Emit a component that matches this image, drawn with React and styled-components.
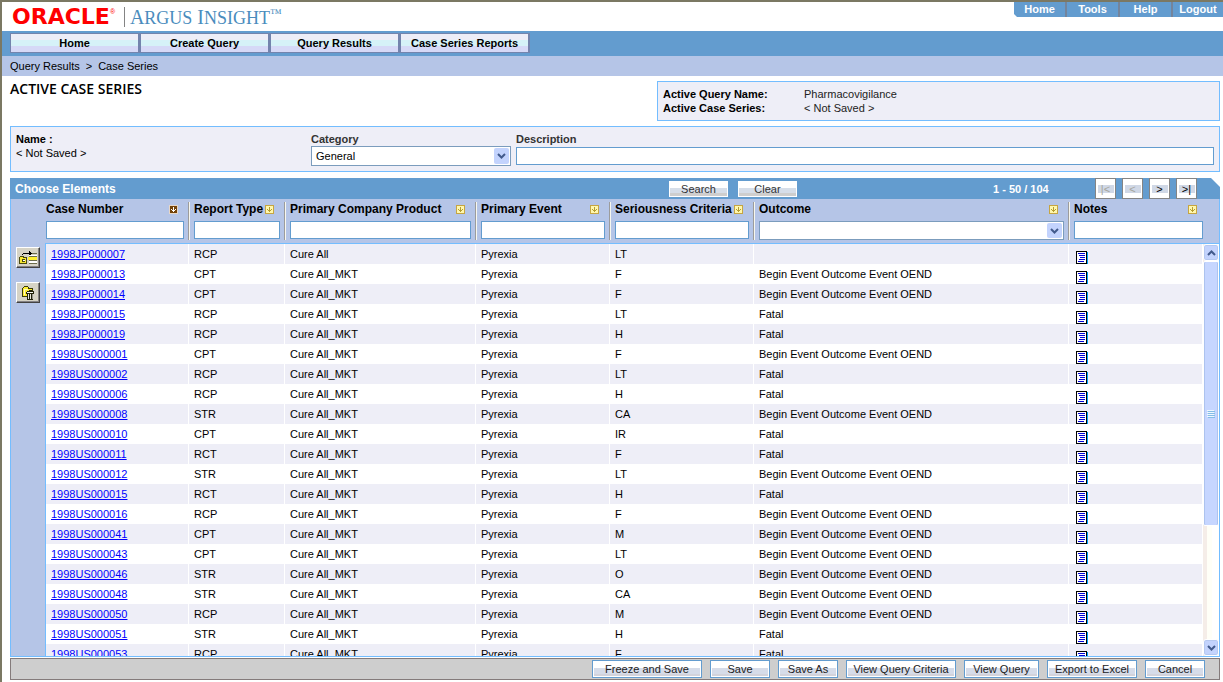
import React from 'react';
import styled, { createGlobalStyle, css } from 'styled-components';

const caseRows = [
  ['1998JP000007', 'RCP', 'Cure All', 'Pyrexia', 'LT', ''],
  ['1998JP000013', 'CPT', 'Cure All_MKT', 'Pyrexia', 'F', 'Begin Event Outcome Event OEND'],
  ['1998JP000014', 'CPT', 'Cure All_MKT', 'Pyrexia', 'F', 'Begin Event Outcome Event OEND'],
  ['1998JP000015', 'RCP', 'Cure All_MKT', 'Pyrexia', 'LT', 'Fatal'],
  ['1998JP000019', 'RCP', 'Cure All_MKT', 'Pyrexia', 'H', 'Fatal'],
  ['1998US000001', 'CPT', 'Cure All_MKT', 'Pyrexia', 'F', 'Begin Event Outcome Event OEND'],
  ['1998US000002', 'RCP', 'Cure All_MKT', 'Pyrexia', 'LT', 'Fatal'],
  ['1998US000006', 'RCP', 'Cure All_MKT', 'Pyrexia', 'H', 'Fatal'],
  ['1998US000008', 'STR', 'Cure All_MKT', 'Pyrexia', 'CA', 'Begin Event Outcome Event OEND'],
  ['1998US000010', 'CPT', 'Cure All_MKT', 'Pyrexia', 'IR', 'Fatal'],
  ['1998US000011', 'RCT', 'Cure All_MKT', 'Pyrexia', 'F', 'Fatal'],
  ['1998US000012', 'STR', 'Cure All_MKT', 'Pyrexia', 'LT', 'Begin Event Outcome Event OEND'],
  ['1998US000015', 'RCT', 'Cure All_MKT', 'Pyrexia', 'H', 'Fatal'],
  ['1998US000016', 'RCP', 'Cure All_MKT', 'Pyrexia', 'F', 'Begin Event Outcome Event OEND'],
  ['1998US000041', 'CPT', 'Cure All_MKT', 'Pyrexia', 'M', 'Begin Event Outcome Event OEND'],
  ['1998US000043', 'CPT', 'Cure All_MKT', 'Pyrexia', 'LT', 'Begin Event Outcome Event OEND'],
  ['1998US000046', 'STR', 'Cure All_MKT', 'Pyrexia', 'O', 'Begin Event Outcome Event OEND'],
  ['1998US000048', 'STR', 'Cure All_MKT', 'Pyrexia', 'CA', 'Begin Event Outcome Event OEND'],
  ['1998US000050', 'RCP', 'Cure All_MKT', 'Pyrexia', 'M', 'Begin Event Outcome Event OEND'],
  ['1998US000051', 'STR', 'Cure All_MKT', 'Pyrexia', 'H', 'Fatal'],
  ['1998US000053', 'RCP', 'Cure All_MKT', 'Pyrexia', 'F', 'Fatal'],
];

const columns = [
  { label: 'Case Number', sorted: true },
  { label: 'Report Type' },
  { label: 'Primary Company Product' },
  { label: 'Primary Event' },
  { label: 'Seriousness Criteria' },
  { label: 'Outcome', select: true },
  { label: 'Notes' },
];

const footerButtons = [
  ['Freeze and Save', 110],
  ['Save', 60],
  ['Save As', 60],
  ['View Query Criteria', 110],
  ['View Query', 75],
  ['Export to Excel', 90],
  ['Cancel', 60],
];

function Columns() {
  return (
    <colgroup>
      <Col $w={143} />
      <Col $w={96} />
      <Col $w={191} />
      <Col $w={134} />
      <Col $w={144} />
      <Col />
      <Col $w={134} />
    </colgroup>
  );
}

function SortIcon({ sorted }) {
  const ink = sorted ? '#fff' : '#b59c31';
  return (
    <svg width="9" height="9" viewBox="0 0 9 9" shapeRendering="crispEdges" aria-hidden="true">
      <rect width="9" height="9" fill={sorted ? '#e7d6c6' : '#c6a542'} />
      <rect x="1" y="1" width="7" height="7" fill={sorted ? '#734208' : '#fff7ad'} />
      <path d="M4 2h1v5h-1zM2 4h1v1h-1zM6 4h1v1h-1zM3 5h3v1h-3z" fill={ink} />
    </svg>
  );
}

function NoteIcon() {
  return (
    <svg width="12" height="13" viewBox="0 0 12 13" shapeRendering="crispEdges" aria-hidden="true">
      <rect x="1" y="1" width="11" height="12" fill="#00a5ff" />
      <rect width="11" height="13" fill="#000" />
      <rect x="1" y="1" width="9" height="11" fill="#fff" />
      <path d="M2 2h7v1h-7zM3 4h6v1h-6zM4 6h5v1h-5zM3 8h6v1h-6zM2 10h6v1h-6z" fill="#0000d6" />
    </svg>
  );
}

function AddCaseIcon() {
  return (
    <svg width="20" height="16" viewBox="0 0 20 16" shapeRendering="crispEdges" aria-hidden="true">
      <path d="M4 4h1v-1h6v-2h1v1h1v1h1v1h-1v1h-1v1h-1v-2h-6v1h-1z" fill="#000" />
      <path d="M11 5h8v9h-8z" fill="#fff" />
      <path d="M14 3h5v1h-5zM11 13h8v1h-8zM11 10h8v1h-8zM11 6h8v1h-8z" fill="#6b6b4a" />
      <path d="M10 7h9v3h-9z" fill="#ffef31" />
      <path d="M1 7h1v-1h4v1h3v7h-8z" fill="#4a4a10" />
      <path d="M2 7h3v1h-3zM2 8h6v5h-6z" fill="#f7e731" />
      <path d="M4 9h3v3h-3z" fill="#4a4a10" />
      <path d="M5 10h2v1h-2z" fill="#fff" />
    </svg>
  );
}

function DeleteCaseIcon() {
  return (
    <svg width="20" height="16" viewBox="0 0 20 16" shapeRendering="crispEdges" aria-hidden="true">
      <path d="M4 3h1v-1h1v-1h4v1h1v1h4v4h-1v5h-10z" fill="#39390a" />
      <path d="M6 2h4v1h-4zM5 3h5v8h-5zM10 4h4v2h-4z" fill="#ffef31" />
      <path d="M6 4h1v6h-1zM7 4h3v1h-3z" fill="#fffbc0" />
      <path d="M8 7h1v-1h2v-1h3v1h2v3h-1v6h-6v-6h-1z" fill="#21210a" />
      <path d="M9 7h6v1h-6z" fill="#f7f7ef" />
      <path d="M10 9h1v5h-1zM12 9h1v5h-1z" fill="#e7e7de" />
      <path d="M14 9h1v5h-1z" fill="#94948c" />
    </svg>
  );
}

function Chevron({ up }) {
  return (
    <svg width="9" height="6" viewBox="0 0 9 6" aria-hidden="true">
      <path d={up ? 'M1 5L4.500 1.500L8 5' : 'M1 1L4.500 4.500L8 1'} fill="none" stroke="#425a8c" strokeWidth="2" />
    </svg>
  );
}

function SelectBox({ id, label, options, tall }) {
  return (
    <SelectWrap>
      <Select id={id} aria-label={label} $tall={tall}>
        {options.map((o) => (
          <option key={o}>{o}</option>
        ))}
      </Select>
      <SelectArrow>
        <Chevron />
      </SelectArrow>
    </SelectWrap>
  );
}

function Header() {
  return (
    <Top>
      <Brand>
        <Oracle>ORACLE</Oracle>
        <Registered>®</Registered>
        <Product>
          A<small>RGUS</small> I<small>NSIGHT</small>
          <sup>™</sup>
        </Product>
      </Brand>
      <TopMenu>
        {['Home', 'Tools', 'Help', 'Logout'].map((item) => (
          <TopLink href="#" key={item}>{item}</TopLink>
        ))}
      </TopMenu>
    </Top>
  );
}

function CaseSeriesForm() {
  return (
    <SeriesForm>
      <div>
        <Strong>Name :</Strong>
        <div>&lt; Not Saved &gt;</div>
      </div>
      <div>
        <FieldLabel htmlFor="category">Category</FieldLabel>
        <SelectBox id="category" options={['General']} tall />
      </div>
      <div>
        <FieldLabel htmlFor="description">Description</FieldLabel>
        <DescriptionInput id="description" type="text" />
      </div>
    </SeriesForm>
  );
}

function Toolbar() {
  return (
    <Bar>
      <BarTitle>Choose Elements</BarTitle>
      <BarButtons>
        <BarButton type="button">Search</BarButton>
        <BarButton type="button">Clear</BarButton>
      </BarButtons>
      <Count>1 - 50 / 104</Count>
      <Pager>
        <PageButton type="button" disabled>|&lt;</PageButton>
        <PageButton type="button" disabled>&lt;</PageButton>
        <PageButton type="button">&gt;</PageButton>
        <PageButton type="button">&gt;|</PageButton>
      </Pager>
    </Bar>
  );
}

function CaseTable() {
  return (
    <Panel>
      <Side>
        <SideButton type="button" aria-label="Add case"><AddCaseIcon /></SideButton>
        <SideButton type="button" aria-label="Delete case"><DeleteCaseIcon /></SideButton>
      </Side>
      <TableArea>
        <HeadWrap>
          <Table>
            <Columns />
            <thead>
              <tr>
                {columns.map((c) => (
                  <Th key={c.label}>
                    <HeadCell>
                      <HeadLabel>
                        <span>{c.label}</span>
                        <SortIcon sorted={c.sorted} />
                      </HeadLabel>
                      {c.select ? (
                        <SelectBox label={c.label} options={['']} />
                      ) : (
                        <FilterInput type="text" aria-label={c.label} />
                      )}
                    </HeadCell>
                  </Th>
                ))}
              </tr>
            </thead>
          </Table>
        </HeadWrap>
        <BodyWrap>
          <Rows>
            <Table>
              <Columns />
              <tbody>
                {caseRows.map(([id, ...cells]) => (
                  <Row key={id}>
                    <Td><CaseLink href="#">{id}</CaseLink></Td>
                    {cells.map((cell, i) => (
                      <Td key={i}>{cell}</Td>
                    ))}
                    <NoteTd><NoteIcon /></NoteTd>
                  </Row>
                ))}
              </tbody>
            </Table>
          </Rows>
          <Scrollbar>
            <ScrollButton type="button" aria-label="Scroll up"><Chevron up /></ScrollButton>
            <Track>
              <Thumb>
                <svg width="8" height="8" viewBox="0 0 8 8" shapeRendering="crispEdges" aria-hidden="true">
                  <path d="M0 0h7v1h-7zM0 2h7v1h-7zM0 4h7v1h-7zM0 6h7v1h-7z" fill="#eef7ff" />
                  <path d="M1 1h7v1h-7zM1 3h7v1h-7zM1 5h7v1h-7zM1 7h7v1h-7z" fill="#84bde7" />
                </svg>
              </Thumb>
            </Track>
            <ScrollButton type="button" aria-label="Scroll down"><Chevron /></ScrollButton>
          </Scrollbar>
        </BodyWrap>
      </TableArea>
    </Panel>
  );
}

export default function App() {
  return (
    <>
      <GlobalStyle />
      <Page>
        <Header />
        <Nav>
          {['Home', 'Create Query', 'Query Results', 'Case Series Reports'].map((tab) => (
            <NavTab href="#" key={tab}>{tab}</NavTab>
          ))}
        </Nav>
        <Crumbs>
          <span>Query Results</span>
          <span>&gt;</span>
          <span>Case Series</span>
        </Crumbs>
        <Content>
          <TitleRow>
            <Title>ACTIVE CASE SERIES</Title>
            <QueryInfo>
              <dt>Active Query Name:</dt>
              <dd>Pharmacovigilance</dd>
              <dt>Active Case Series:</dt>
              <dd>&lt; Not Saved &gt;</dd>
            </QueryInfo>
          </TitleRow>
          <CaseSeriesForm />
          <Toolbar />
          <CaseTable />
          <Footer>
            {footerButtons.map(([label, width]) => (
              <FooterButton type="button" key={label} $w={width}>{label}</FooterButton>
            ))}
          </Footer>
        </Content>
      </Page>
    </>
  );
}

const GlobalStyle = createGlobalStyle`
  * {
    box-sizing: border-box;
  }

  body {
    margin: 0;
    background: #fff;
    color: #000;
    font: 11px/14px 'Liberation Sans', Arial, sans-serif;
  }

  button, input, select {
    font: inherit;
    margin: 0;
    border-radius: 0;
  }

  svg {
    display: block;
    flex: none;
  }
`;

const Page = styled.div`
  display: flex;
  flex-direction: column;
  height: 100vh;
  overflow: hidden;
  border-top: 2px solid #7b7863;
  border-left: 2px solid #7b7863;
`;

const Top = styled.header`
  display: flex;
  justify-content: space-between;
  align-items: flex-start;
  height: 29px;
  flex: none;
`;

const Brand = styled.div`
  display: flex;
  align-items: center;
  height: 29px;
  padding-left: 10px;
`;

const Oracle = styled.span`
  font: bold 22px/28px 'DejaVu Sans', sans-serif;
  color: #f00;
`;

const Registered = styled.span`
  align-self: flex-start;
  padding-top: 6px;
  width: 14px;
  font-size: 7px;
  line-height: 8px;
  color: #f00;
`;

const Product = styled.span`
  display: flex;
  align-items: baseline;
  white-space: pre;
  height: 20px;
  padding-left: 5px;
  border-left: 1px solid #848484;
  font: 20px/20px 'Liberation Serif', serif;
  color: #4a8cbd;

  small {
    font-size: 18px;
  }

  sup {
    align-self: flex-start;
    font-size: 12px;
    line-height: 12px;
  }
`;

const TopMenu = styled.nav`
  display: flex;
  background: #639ccf;
  clip-path: polygon(0 0, 100% 0, 100% 100%, 3px 100%, 0 12px);
`;

const TopLink = styled.a`
  width: 53px;
  height: 15px;
  border-right: 2px solid #73849c;
  text-align: center;
  font-weight: bold;
  color: #fff;
  text-decoration: none;

  &:last-child {
    width: 50px;
    border-right: 0;
  }
`;

const Nav = styled.nav`
  display: flex;
  flex: none;
  height: 25px;
  padding: 2px 8px 3px;
  background: #639ccf;
`;

const NavTab = styled.a`
  width: 130px;
  border: 1px solid #7384ad;
  border-right-width: 2px;
  background: linear-gradient(#ededf7 0 6px, #d6f2f8 6px 12px, #d6d9f7 12px);
  text-align: center;
  font-weight: bold;
  line-height: 18px;
  color: #000;
  text-decoration: none;
`;

const Crumbs = styled.div`
  display: flex;
  flex: none;
  gap: 6px;
  height: 20px;
  padding-left: 8px;
  background: #b5c5e7;
  line-height: 20px;
`;

const Content = styled.main`
  display: flex;
  flex-direction: column;
  flex: 1;
  min-height: 0;
  padding: 5px 3px 2px 8px;
`;

const TitleRow = styled.div`
  display: flex;
  justify-content: space-between;
  flex: none;
`;

const Title = styled.h1`
  margin: 0;
  font: 600 14px/16px 'Open Sans', sans-serif;
`;

const panelBox = css`
  border: 1px solid #73bdff;
  background: #eeeef7;
`;

const QueryInfo = styled.dl`
  ${panelBox}
  display: grid;
  grid-template-columns: 141px 1fr;
  align-content: center;
  width: 563px;
  height: 40px;
  margin: 0;
  padding-left: 5px;

  dt {
    font-weight: bold;
  }

  dd {
    margin: 0;
    color: #222;
  }
`;

const SeriesForm = styled.form`
  ${panelBox}
  display: grid;
  grid-template-columns: 290px 200px 1fr;
  column-gap: 5px;
  flex: none;
  height: 46px;
  margin: 5px 0 6px;
  padding: 5px;
`;

const Strong = styled.div`
  font-weight: bold;
`;

const FieldLabel = styled.label`
  display: block;
  font-weight: bold;
  color: #333;
`;

const SelectWrap = styled.div`
  position: relative;
`;

const Select = styled.select`
  appearance: none;
  display: block;
  width: 100%;
  height: ${(p) => (p.$tall ? 20 : 19)}px;
  padding: 0 20px 0 4px;
  border: 1px solid #7b9cbd;
  background: #fff;
  color: #000;
`;

const SelectArrow = styled.span`
  position: absolute;
  top: 2px;
  right: 2px;
  bottom: 2px;
  width: 15px;
  display: flex;
  align-items: center;
  justify-content: center;
  border-radius: 2px;
  background: #c3d3fd;
  pointer-events: none;
`;

const DescriptionInput = styled.input`
  display: block;
  width: 100%;
  height: 18px;
  margin-top: 1px;
  border: 1px solid #639ccf;
  background: #fff;
`;

const Bar = styled.div`
  display: grid;
  grid-template-columns: 1fr 324px 102px 125px;
  align-items: center;
  flex: none;
  height: 21px;
  padding-left: 5px;
  background: #639ccf;
  clip-path: polygon(0 0, calc(100% - 9px) 0, 100% 9px, 100% 100%, 0 100%);
`;

const BarTitle = styled.h2`
  margin: 0;
  font-size: 12px;
  color: #fff;
`;

const BarButtons = styled.div`
  display: flex;
  gap: 10px;
`;

const BarButton = styled.button`
  width: 59px;
  height: 16px;
  padding: 0;
  border: 1px solid #fff;
  background: linear-gradient(#fff 0 6px, #d6dee9 6px 11px, #cecece 11px);
  line-height: 14px;
  color: #333;
`;

const Count = styled.span`
  font-weight: bold;
  color: #fff;
`;

const Pager = styled.div`
  display: flex;
  gap: 6px;
`;

const PageButton = styled.button`
  width: 21px;
  height: 21px;
  padding: 0;
  border: 1px solid #848484;
  background: linear-gradient(#d0d8e6, #d0d8e6) center / 16px 8px no-repeat #fff;
  color: #000;

  &:disabled {
    color: #a5a59c;
  }
`;

const Panel = styled.section`
  display: flex;
  flex: 1;
  min-height: 0;
  border: 1px solid #73bdff;
  border-top: 0;
  background: #b5c5e7;
`;

const Side = styled.div`
  display: flex;
  flex-direction: column;
  align-items: center;
  gap: 14px;
  width: 34px;
  padding-top: 48px;
`;

const SideButton = styled.button`
  display: flex;
  align-items: center;
  justify-content: center;
  width: 24px;
  height: 21px;
  padding: 0;
  border: 1px solid;
  border-color: #fff #424242 #424242 #fff;
  background: #d6d3c6;
  box-shadow: inset -1px -1px #848284;
`;

const TableArea = styled.div`
  display: flex;
  flex-direction: column;
  flex: 1;
  min-width: 0;
`;

const HeadWrap = styled.div`
  padding: 0 16px 0 1px;
`;

const Table = styled.table`
  width: 100%;
  table-layout: fixed;
  border-collapse: separate;
  border-spacing: 0;
`;

const Col = styled.col`
  width: ${(p) => (p.$w ? `${p.$w}px` : 'auto')};
`;

const HeadCell = styled.div`
  height: 38px;
  padding: 0 4px;
  border-left: 1px solid #f7f7ef;
  border-right: 1px solid #9c9c9c;
`;

const Th = styled.th`
  padding: 3px 0;
  text-align: left;

  &:first-child ${HeadCell} {
    padding-left: 0;
    border-left: 0;
  }

  &:last-child ${HeadCell} {
    padding-right: 0;
    border-right: 0;
  }
`;

const HeadLabel = styled.div`
  display: flex;
  align-items: center;
  justify-content: space-between;
  height: 19px;
  padding: 0 6px 5px 0;
  font-size: 12px;
  white-space: nowrap;
`;

const FilterInput = styled.input`
  display: block;
  width: 100%;
  height: 18px;
  border: 1px solid #639ccf;
  background: #fff;
`;

const BodyWrap = styled.div`
  display: flex;
  flex: 1;
  min-height: 0;
  border-top: 1px solid #73bdff;
  border-left: 1px solid #73bdff;
  background: #fff;
`;

const Rows = styled.div`
  flex: 1;
  min-width: 0;
  overflow-y: auto;
  scrollbar-width: none;
`;

const Row = styled.tr`
  background: #fff;

  &:nth-child(odd) {
    background: #eeeef7;
  }
`;

const Td = styled.td`
  height: 20px;
  padding: 0 0 0 5px;
  border-right: 1px solid #fff;
  white-space: nowrap;
`;

const NoteTd = styled(Td)`
  padding: 6px 0 0 7px;
`;

const CaseLink = styled.a`
  color: #00f;
`;

const Scrollbar = styled.div`
  display: flex;
  flex-direction: column;
  width: 16px;
  background: linear-gradient(90deg, #f5ede8 0 4px, #fffff7 4px 9px, #fff 9px);
`;

const ScrollButton = styled.button`
  display: flex;
  align-items: center;
  justify-content: center;
  height: 17px;
  flex: none;
  padding: 0;
  border: 1px solid #fff;
  border-radius: 3px;
  background: #c3d3fd;
  box-shadow: inset 0 0 0 1px #b5c8f0;
`;

const Track = styled.div`
  flex: 1;
  min-height: 0;
`;

const Thumb = styled.div`
  display: flex;
  align-items: center;
  justify-content: center;
  height: 70%;
  padding-top: 42px;
  border: 1px solid #fff;
  border-radius: 2px;
  background: #c6d6ff;
  box-shadow: inset 1px 0 #adc3ee, inset -1px 0 #adc3ee;
`;

const Footer = styled.footer`
  display: flex;
  align-items: center;
  justify-content: flex-end;
  flex: none;
  gap: 8px;
  height: 22px;
  margin-top: 1px;
  padding-right: 14px;
  border: 1px solid #847b7b;
  background: #cecece;
`;

const FooterButton = styled.button`
  width: ${(p) => p.$w}px;
  height: 18px;
  padding: 0;
  border: 1px solid #639ccf;
  background: linear-gradient(#fff 0 6px, #d6dce9 6px 12px, #d3d3db 12px) center / calc(100% - 2px) 14px no-repeat #fff;
  line-height: 16px;
  color: #222;
  white-space: nowrap;
`;
